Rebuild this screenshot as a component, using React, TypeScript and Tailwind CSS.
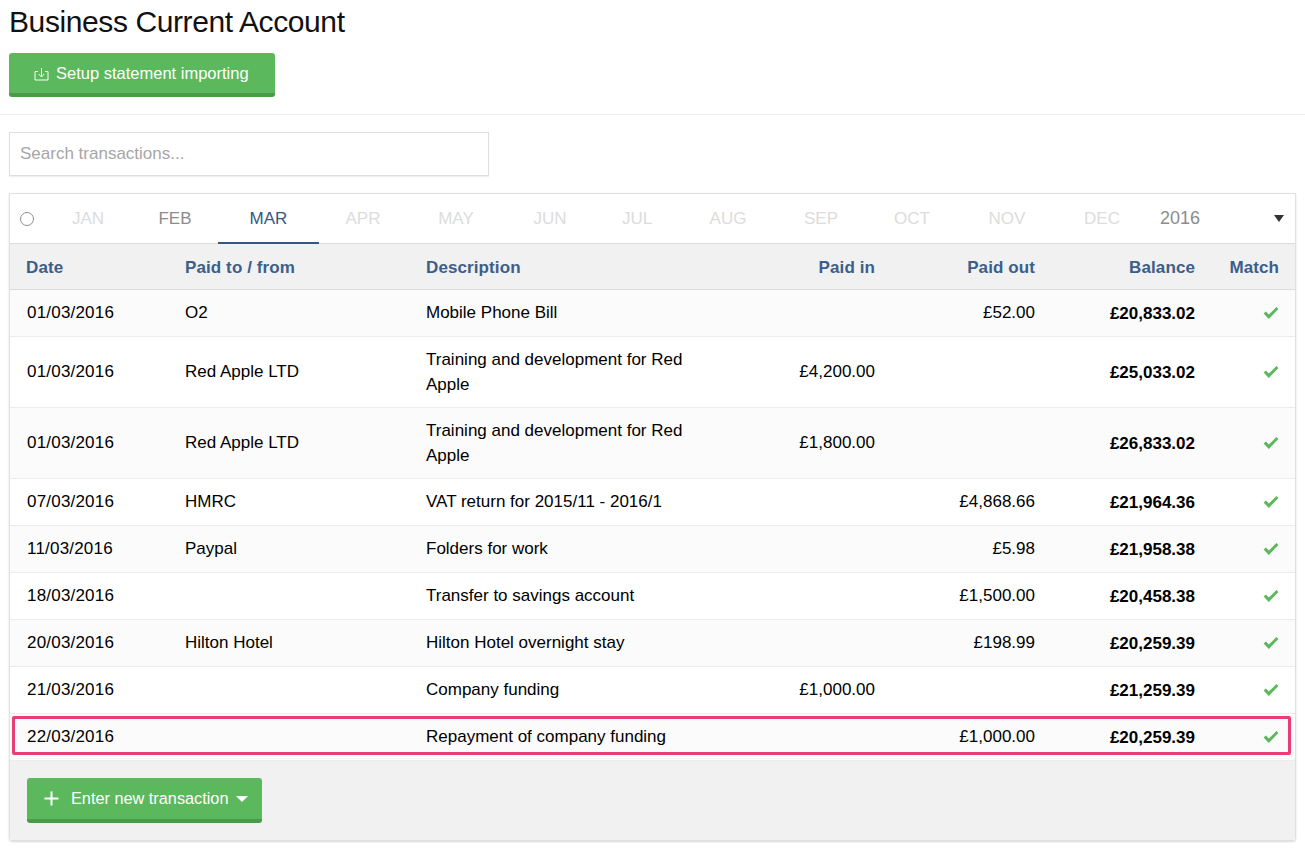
import React from "react";

const months: [string, string, string][] = [
  ["JAN", "text-[#dcdcdc]", "w-[88px]"],
  ["FEB", "text-[#8c8c8c]", "w-[86px]"],
  ["MAR", "text-[#36577f]", "w-[101px]"],
  ["APR", "text-[#dcdcdc]", "w-[88px]"],
  ["MAY", "text-[#dcdcdc]", "w-[98px]"],
  ["JUN", "text-[#dcdcdc]", "w-[90px]"],
  ["JUL", "text-[#dcdcdc]", "w-[84px]"],
  ["AUG", "text-[#dcdcdc]", "w-[98px]"],
  ["SEP", "text-[#dcdcdc]", "w-[88px]"],
  ["OCT", "text-[#dcdcdc]", "w-[94px]"],
  ["NOV", "text-[#dcdcdc]", "w-[96px]"],
  ["DEC", "text-[#dcdcdc]", "w-[94px]"],
];

const rows = [
  ["01/03/2016", "O2", ["Mobile Phone Bill"], "", "£52.00", "£20,833.02"],
  ["01/03/2016", "Red Apple LTD", ["Training and development for Red", "Apple"], "£4,200.00", "", "£25,033.02"],
  ["01/03/2016", "Red Apple LTD", ["Training and development for Red", "Apple"], "£1,800.00", "", "£26,833.02"],
  ["07/03/2016", "HMRC", ["VAT return for 2015/11 - 2016/1"], "", "£4,868.66", "£21,964.36"],
  ["11/03/2016", "Paypal", ["Folders for work"], "", "£5.98", "£21,958.38"],
  ["18/03/2016", "", ["Transfer to savings account"], "", "£1,500.00", "£20,458.38"],
  ["20/03/2016", "Hilton Hotel", ["Hilton Hotel overnight stay"], "", "£198.99", "£20,259.39"],
  ["21/03/2016", "", ["Company funding"], "£1,000.00", "", "£21,259.39"],
  ["22/03/2016", "", ["Repayment of company funding"], "", "£1,000.00", "£20,259.39"],
] as const;

const grid = "grid grid-cols-[159px_241px_320px_161px_160px_160px_84px] items-center";

function Check() {
  return (
    <svg width="16" height="14" viewBox="0 0 16 14" className="block">
      <path d="M0.6 7.6 L3 5.6 L5.8 8.6 L13.4 1 L15.4 3 L5.8 13 Z" fill="#5cb85c" />
    </svg>
  );
}

export default function App() {
  return (
    <div className="relative w-[1305px] h-[850px] overflow-hidden bg-white text-black font-['Liberation_Sans',Arial,sans-serif]">
      <div className="h-[115px] border-b border-[#efefef] pl-[9px]">
        <h1 className="m-0 pt-[4px] text-[30px] leading-[36px] font-normal tracking-[-0.4px] text-[#111]">Business Current Account</h1>
        <button className="mt-[13px] flex h-[44px] w-[266px] items-center rounded-[3px] border-b-4 border-[#4a9a4a] bg-[#5cb85c] pl-[25px] pt-[1px] text-[16.5px] text-white">
          <svg width="15" height="14" viewBox="0 0 15 14" fill="none" stroke="#fff" strokeWidth="1" className="mr-[7px]">
            <path d="M4 4.5H1V13H14V4.5H11" />
            <path d="M7.5 1V9.5M4.8 7L7.5 10L10.2 7" />
          </svg>
          Setup statement importing
        </button>
      </div>

      <div className="ml-[9px] mt-[17px] flex h-[44px] w-[480px] items-center border border-[#dedede] pl-[10px] text-[17px] text-[#a6a6a6] shadow-[0_1px_1px_rgba(0,0,0,0.06)]">
        Search transactions...
      </div>

      <div className="ml-[9px] mt-[17px] h-[648px] w-[1287px] rounded-b-[3px] border border-[#e0e0e0] shadow-[0_1px_2px_rgba(0,0,0,0.15)]">
        <div className="flex h-[50px] items-center border-b border-[#dcdcdc] text-[17px]">
          <span className="ml-[10px] mr-[10px] h-[14px] w-[14px] rounded-full border border-[#8c8c8c]" />
          {months.map(([m, c, w]) =>
            m === "MAR" ? (
              <span key={m} className={`-mb-px flex h-[50px] items-center justify-center border-b-2 border-[#36577f] pt-[1px] ${w} ${c}`}>{m}</span>
            ) : (
              <span key={m} className={`text-center ${w} ${c}`}>{m}</span>
            )
          )}
          <span className="ml-[11px] text-[18px] text-[#8c8c8c]">2016</span>
          <span className="ml-[74px] h-0 w-0 border-x-[5px] border-t-[7px] border-x-transparent border-t-[#333]" />
        </div>

        <div className={`${grid} h-[46px] border-b border-[#dcdcdc] bg-[#f1f1f1] pt-[2px] text-[17px] font-bold tracking-[0.1px] text-[#3b5f8a]`}>
          <div className="pl-[16px]">Date</div>
          <div className="pl-[16px]">Paid to / from</div>
          <div className="pl-[16px]">Description</div>
          <div className="pr-[16px] text-right">Paid in</div>
          <div className="pr-[16px] text-right">Paid out</div>
          <div className="pr-[16px] text-right">Balance</div>
          <div className="pr-[16px] text-right">Match</div>
        </div>

        {rows.map((r, i) => (
          <div
            key={i}
            className={`${grid} border-b border-[#ececec] text-[17px] leading-[25px] ${r[2].length > 1 ? "h-[71px]" : "h-[47px]"} ${i % 2 === 0 ? "bg-[#fbfbfb]" : "bg-white"}`}
          >
            <div className="-mt-[2px] pl-[17px] tracking-[0.2px]">{r[0]}</div>
            <div className="-mt-[2px] pl-[16px]">{r[1]}</div>
            <div className={`pl-[16px] ${r[2].length > 1 ? "" : "-mt-[2px]"}`}>
              {r[2].map((l) => (
                <div key={l}>{l}</div>
              ))}
            </div>
            <div className="-mt-[2px] pr-[16px] text-right">{r[3]}</div>
            <div className="-mt-[2px] pr-[16px] text-right">{r[4]}</div>
            <div className="pr-[16px] text-right font-bold">{r[5]}</div>
            <div className="flex justify-end pr-[16px]">
              <Check />
            </div>
          </div>
        ))}

        <div className="h-[79px] bg-[#f1f1f1] pl-[17px] pt-[17px]">
          <button className="flex h-[45px] w-[235px] items-center rounded-[3px] border-b-4 border-[#4a9a4a] bg-[#5cb85c] pl-[17px] text-[16.3px] text-white">
            <svg width="15" height="15" viewBox="0 0 15 15" stroke="#fff" strokeWidth="2" className="mr-[12px]">
              <path d="M7.5 0.5V14.5M0.5 7.5H14.5" />
            </svg>
            Enter new transaction
            <span className="ml-[8px] h-0 w-0 border-x-[6px] border-t-[6px] border-x-transparent border-t-white" />
          </button>
        </div>
      </div>

      <div className="absolute left-[12px] top-[716px] h-[39px] w-[1279px] rounded-[2px] border-[3px] border-[#e83e75]" />
    </div>
  );
}
